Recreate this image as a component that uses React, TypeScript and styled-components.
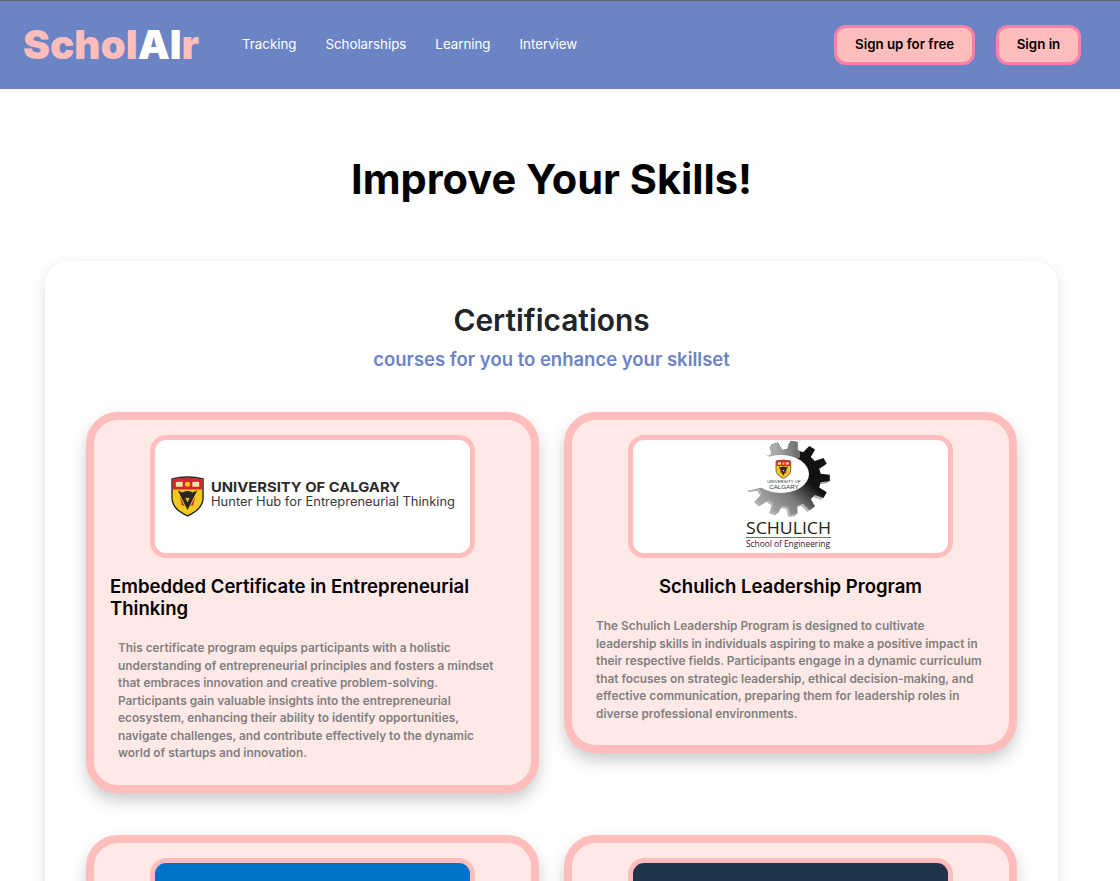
import React from "react";
import styled, { createGlobalStyle } from "styled-components";

const GlobalStyle = createGlobalStyle`
  html, body {
    margin: 0;
    padding: 0;
    background: #fefefe;
    font-family: Inter, "Liberation Sans", sans-serif;
  }
`;

const Header = styled.header`
  display: flex;
  align-items: center;
  box-sizing: border-box;
  height: 89px;
  padding: 0 39px 0 23px;
  background-color: #6b84c5;
  border-top: 1px solid #666;
`;

const Logo = styled.div`
  font-size: 40.4px;
  font-weight: 900;
  line-height: 44px;
  color: #ffbdbb;
  width: 176px;
  white-space: nowrap;
`;

const LogoAccent = styled.span`
  color: #fff;
`;

const Nav = styled.nav`
  display: flex;
  gap: 29px;
  margin: 0 0 2px 43px;
  flex: 1;
`;

const NavLink = styled.a`
  font-size: 13.3px;
  color: #fff;
  text-decoration: none;
`;

const AuthButtons = styled.div`
  display: flex;
  gap: 21px;
`;

const AuthButton = styled.button`
  box-sizing: border-box;
  height: 40px;
  padding: 0 17.75px 2px;
  border: 3px solid #ff80a6;
  border-radius: 12px;
  background-color: #ffbdbb;
  color: #000;
  font-family: inherit;
  font-size: 13.3px;
  font-weight: 600;
`;

const Main = styled.main`
  box-sizing: border-box;
  width: 1103px;
  padding: 65px 45px 60px;
`;

const PageTitle = styled.h1`
  margin: 0 0 56px;
  font-size: 41.5px;
  font-weight: 700;
  line-height: 51px;
  text-align: center;
  color: #000;
`;

const Panel = styled.section`
  box-sizing: border-box;
  width: 1013px;
  padding: 40px 41px;
  border-radius: 24px;
  background-color: #fff;
  box-shadow: 0 4px 12px rgba(0, 0, 0, 0.12);
`;

const PanelTitle = styled.h2`
  margin: 0;
  font-size: 29.9px;
  font-weight: 600;
  line-height: 38px;
  text-align: center;
  color: #212529;
`;

const PanelSubtitle = styled.p`
  margin: 9px 0 42px;
  font-size: 18.5px;
  font-weight: 600;
  line-height: 22px;
  text-align: center;
  color: #6b84c5;
`;

const CardGrid = styled.div`
  display: grid;
  grid-template-columns: 453px 453px;
  column-gap: 25px;
  row-gap: 42px;
  align-items: start;
`;

const Card = styled.article`
  display: flex;
  flex-direction: column;
  align-items: center;
  box-sizing: border-box;
  padding: 15px 16px 22px;
  border: 8px solid #ffbdbb;
  border-radius: 32px;
  background-color: #ffe9e7;
  box-shadow: 0 8px 16px rgba(0, 0, 0, 0.2);
`;

const LogoFrame = styled.div<{ $bg: string }>`
  box-sizing: border-box;
  width: 325px;
  height: 123px;
  border: 5px solid #ffbdbb;
  border-radius: 16px;
  overflow: hidden;
  background-color: ${(p) => p.$bg};

  svg {
    display: block;
  }
`;

const CardTitle = styled.h3`
  margin: 17px 0 21px;
  font-size: 18.55px;
  font-weight: 600;
  line-height: 22px;
  color: #000;
`;

const CardText = styled.p`
  margin: 0;
  padding: 0 8px;
  font-size: 11.85px;
  font-weight: 600;
  line-height: 17.5px;
  color: #808080;
`;

function gearPath(cx: number, cy: number, outer: number, inner: number, teeth: number) {
  const step = (Math.PI * 2) / teeth;
  const squash = 0.9;
  const points: string[] = [];
  for (let i = 0; i < teeth; i++) {
    const a = i * step;
    const corners: [number, number][] = [
      [a - step * 0.3, inner],
      [a - step * 0.18, outer],
      [a + step * 0.18, outer],
      [a + step * 0.3, inner],
    ];
    corners.forEach(([angle, r]) => {
      points.push(`${(cx + Math.cos(angle) * r).toFixed(1)},${(cy + Math.sin(angle) * r * squash).toFixed(1)}`);
    });
  }
  return `M${points.join("L")}Z`;
}

function UcalgaryShield({ x, y, scale }: { x: number; y: number; scale: number }) {
  return (
    <g transform={`translate(${x} ${y}) scale(${scale})`}>
      <path d="M0 2 Q16 -2 32 2 V22 Q32 33 16 40 Q0 33 0 22Z" fill="#f4c91f" stroke="#222" strokeWidth="1.4" />
      <path d="M0.8 2.6 Q16 -1.2 31.2 2.6 V13 H0.8Z" fill="#d6262d" />
      <rect x="4" y="5" width="7" height="5" fill="#f5e6b0" />
      <rect x="21" y="5" width="7" height="5" fill="#f5e6b0" />
      <circle cx="16" cy="7.5" r="2.6" fill="#f4c91f" />
      <path d="M6 14 L16 34 L26 14 L21 16 L16 26 L11 16Z" fill="#2a2622" />
      <ellipse cx="16" cy="18" rx="6" ry="3.6" fill="#2a2622" />
      <path d="M8 20 L13 30 L10 29Z M24 20 L19 30 L22 29Z" fill="#c8323a" />
    </g>
  );
}

function HunterHubLogo() {
  return (
    <svg width="315" height="113" viewBox="0 0 315 113" role="img" aria-label="University of Calgary Hunter Hub">
      <UcalgaryShield x={17} y={37} scale={0.97} />
      <text x="56" y="51.5" fontFamily="Inter, sans-serif" fontSize="13.5" fontWeight="700" fill="#2b2b2b" textLength="189" lengthAdjust="spacingAndGlyphs">
        UNIVERSITY OF CALGARY
      </text>
      <text x="56" y="66" fontFamily="Inter, sans-serif" fontSize="12.5" fill="#3a3a3a" textLength="244" lengthAdjust="spacingAndGlyphs">
        Hunter Hub for Entrepreneurial Thinking
      </text>
    </svg>
  );
}

function SchulichLogo() {
  const gear = gearPath(156, 38, 41, 32, 13);
  return (
    <svg width="315" height="113" viewBox="0 0 315 113" role="img" aria-label="Schulich School of Engineering">
      <defs>
        <linearGradient id="gearFill" x1="1" y1="0" x2="0" y2="1">
          <stop offset="0.4" stopColor="#111" />
          <stop offset="0.62" stopColor="#7a7a7a" />
          <stop offset="1" stopColor="#c8c8c8" />
        </linearGradient>
        <linearGradient id="gearTop" x1="0" y1="0" x2="1" y2="0">
          <stop offset="0" stopColor="#d8d8d8" />
          <stop offset="1" stopColor="#6a6a6a" />
        </linearGradient>
        <clipPath id="gearClip">
          <path d={gear} />
        </clipPath>
      </defs>
      <path d={gear} transform="translate(-2 2)" fill="#b5b5b5" />
      <path d={gear} fill="url(#gearFill)" />
      <rect x="125" y="0" width="42" height="18" fill="url(#gearTop)" clipPath="url(#gearClip)" />
      <ellipse cx="148" cy="34" rx="28" ry="19" fill="#fff" />
      <path d="M100 -5 H129 L130 12 L140 20 L140 45 L118 50 L100 52Z" fill="#fff" />
      <UcalgaryShield x={143} y={20} scale={0.46} />
      <text x="151" y="43" textAnchor="middle" fontFamily="'Liberation Sans', sans-serif" fontSize="4.4" fill="#333">
        UNIVERSITY OF
      </text>
      <text x="151" y="49" textAnchor="middle" fontFamily="'Liberation Sans', sans-serif" fontSize="6.2" fill="#333">
        CALGARY
      </text>
      <text x="113" y="94" fontFamily="'Open Sans', sans-serif" fontSize="16.5" fill="#222" textLength="85" lengthAdjust="spacingAndGlyphs">
        SCHULICH
      </text>
      <rect x="113" y="97" width="85" height="1" fill="#c0505a" />
      <text x="113" y="107" fontFamily="'Open Sans', sans-serif" fontSize="9.5" fill="#222" textLength="84" lengthAdjust="spacingAndGlyphs">
        School of Engineering
      </text>
    </svg>
  );
}

const NAV_ITEMS = ["Tracking", "Scholarships", "Learning", "Interview"];

const CARDS = [
  {
    title: "Embedded Certificate in Entrepreneurial Thinking",
    text: "This certificate program equips participants with a holistic understanding of entrepreneurial principles and fosters a mindset that embraces innovation and creative problem-solving. Participants gain valuable insights into the entrepreneurial ecosystem, enhancing their ability to identify opportunities, navigate challenges, and contribute effectively to the dynamic world of startups and innovation.",
    bg: "#fff",
    logo: <HunterHubLogo />,
  },
  {
    title: "Schulich Leadership Program",
    text: "The Schulich Leadership Program is designed to cultivate leadership skills in individuals aspiring to make a positive impact in their respective fields. Participants engage in a dynamic curriculum that focuses on strategic leadership, ethical decision-making, and effective communication, preparing them for leadership roles in diverse professional environments.",
    bg: "#fff",
    logo: <SchulichLogo />,
  },
  { title: "", text: "", bg: "#0073c8", logo: null },
  { title: "", text: "", bg: "#20344c", logo: null },
];

export default function App() {
  return (
    <>
      <GlobalStyle />
      <Header>
        <Logo>
          Schol<LogoAccent>AI</LogoAccent>r
        </Logo>
        <Nav>
          {NAV_ITEMS.map((item) => (
            <NavLink key={item} href="#">
              {item}
            </NavLink>
          ))}
        </Nav>
        <AuthButtons>
          <AuthButton>Sign up for free</AuthButton>
          <AuthButton>Sign in</AuthButton>
        </AuthButtons>
      </Header>
      <Main>
        <PageTitle>Improve Your Skills!</PageTitle>
        <Panel>
          <PanelTitle>Certifications</PanelTitle>
          <PanelSubtitle>courses for you to enhance your skillset</PanelSubtitle>
          <CardGrid>
            {CARDS.map((card, i) => (
              <Card key={i}>
                <LogoFrame $bg={card.bg}>{card.logo}</LogoFrame>
                <CardTitle>{card.title}</CardTitle>
                <CardText>{card.text}</CardText>
              </Card>
            ))}
          </CardGrid>
        </Panel>
      </Main>
    </>
  );
}
